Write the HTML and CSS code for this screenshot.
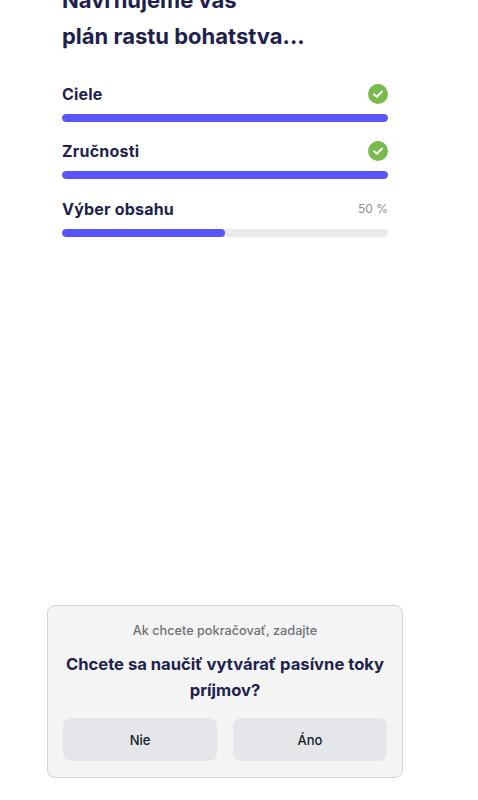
FILE: index.html
```html
<!DOCTYPE html>
<html lang="sk">
<head>
<meta charset="utf-8">
<title>Plán rastu bohatstva</title>
<link rel="stylesheet" href="styles.css">
</head>
<body>
<main class="page">
  <h1 class="title">Navrhujeme vás<br>plán rastu bohatstva...</h1>
  <section class="steps">
    <div class="step">
      <div class="step-head"><span class="step-name">Ciele</span>
        <svg class="check" viewBox="0 0 20 20"><circle cx="10" cy="10" r="10" fill="#76bb4c"/><path d="M6 10.2l2.8 2.6 5.2-5.3" fill="none" stroke="#fff" stroke-width="2" stroke-linecap="round" stroke-linejoin="round"/></svg>
      </div>
      <div class="track"><div class="fill full"></div></div>
    </div>
    <div class="step">
      <div class="step-head"><span class="step-name">Zručnosti</span>
        <svg class="check" viewBox="0 0 20 20"><circle cx="10" cy="10" r="10" fill="#76bb4c"/><path d="M6 10.2l2.8 2.6 5.2-5.3" fill="none" stroke="#fff" stroke-width="2" stroke-linecap="round" stroke-linejoin="round"/></svg>
      </div>
      <div class="track"><div class="fill full"></div></div>
    </div>
    <div class="step">
      <div class="step-head"><span class="step-name">Výber obsahu</span><span class="pct">50 %</span></div>
      <div class="track"><div class="fill half"></div></div>
    </div>
  </section>
</main>
<aside class="card">
  <p class="hint">Ak chcete pokračovať, zadajte</p>
  <p class="question">Chcete sa naučiť vytvárať pasívne toky príjmov?</p>
  <div class="actions">
    <button class="btn" type="button">Nie</button>
    <button class="btn" type="button">Áno</button>
  </div>
</aside>
</body>
</html>
```
FILE: styles.css
```css
html, body {
  margin: 0;
  height: 100%;
  background: #fff;
  overflow: hidden;
}
body {
  position: relative;
  font-family: Inter, "Liberation Sans", sans-serif;
  color: #211f4d;
}
.page {
  padding: 0 90px 0 62px;
}
.title {
  margin: -18px 0 0;
  font-size: 22px;
  line-height: 36px;
  font-weight: 700;
  color: #211f4d;
}
.steps {
  margin-top: 30px;
  display: flex;
  flex-direction: column;
  gap: 19.4px;
}
.step-head {
  display: flex;
  justify-content: space-between;
  align-items: center;
  height: 20px;
  margin-bottom: 10px;
}
.step-name {
  font-size: 16px;
  font-weight: 700;
  letter-spacing: 0.2px;
}
.check {
  width: 20px;
  height: 20px;
}
.pct {
  font-size: 12px;
  color: #8a8d93;
}
.track {
  height: 8px;
  border-radius: 4px;
  background: #e9eaec;
  overflow: hidden;
}
.fill {
  height: 100%;
  border-radius: 4px;
  background: #5a55fb;
}
.full { width: 100%; }
.half { width: 50%; }
.card {
  position: absolute;
  left: 47px;
  top: 605px;
  width: 356px;
  height: 173px;
  box-sizing: border-box;
  padding: 16px 15px 16px;
  background: #f4f4f5;
  border: 1px solid #d4d4d8;
  border-radius: 8px;
  text-align: center;
}
.hint {
  margin: 0;
  font-size: 12.7px;
  line-height: 18px;
  font-weight: 500;
  color: #6f7178;
}
.question {
  margin: 11px 0 0;
  font-size: 16.6px;
  line-height: 26px;
  font-weight: 700;
  color: #211f4d;
}
.actions {
  margin-top: 15px;
  display: grid;
  grid-template-columns: 1fr 1fr;
  gap: 16px;
}
.btn {
  height: 43px;
  border: 0;
  border-radius: 8px;
  background: #e5e6ea;
  font: 500 13px Inter, "Liberation Sans", sans-serif;
  color: #111827;
}
```
